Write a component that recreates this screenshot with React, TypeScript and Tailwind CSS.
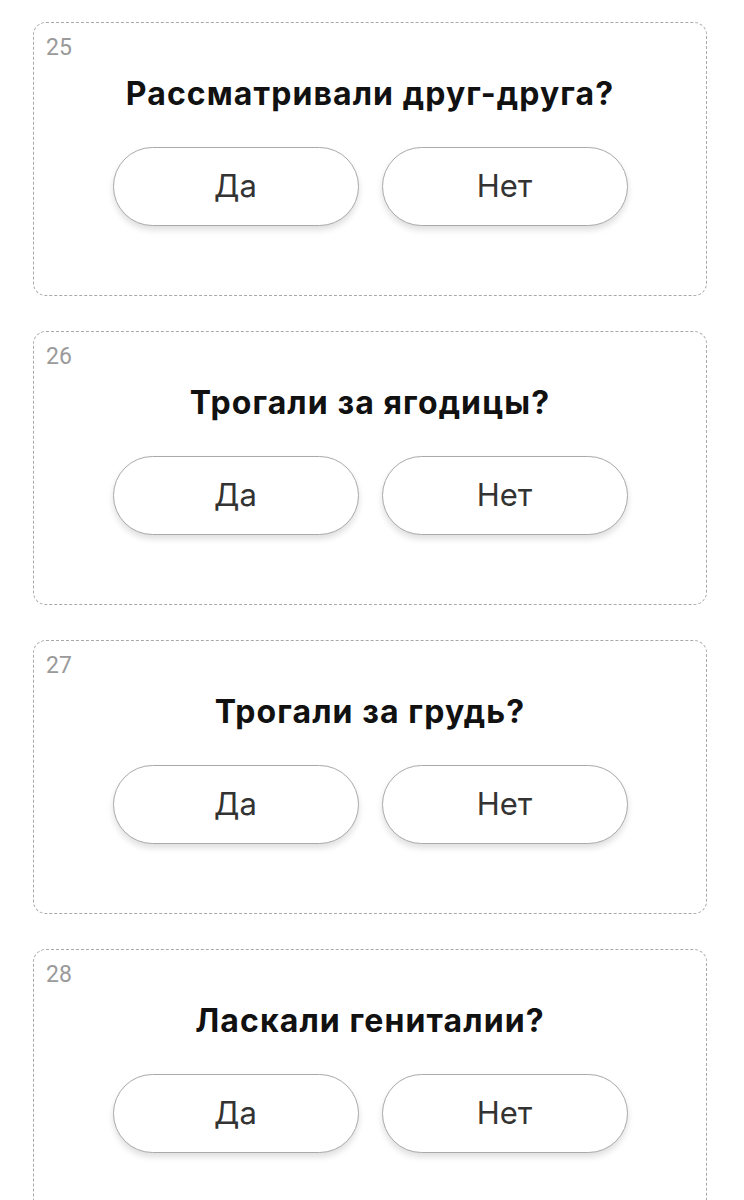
const QUESTIONS = [
  { n: 25, text: "Рассматривали друг-друга?" },
  { n: 26, text: "Трогали за ягодицы?" },
  { n: 27, text: "Трогали за грудь?" },
  { n: 28, text: "Ласкали гениталии?" },
];

export default function App() {
  return (
    <div className="min-h-screen bg-white pt-[22px] pl-[33px] font-['Inter',sans-serif]">
      <div className="flex flex-col gap-[35px] w-[674px]">
        {QUESTIONS.map((q) => (
          <div
            key={q.n}
            className="h-[274px] rounded-[13px] border border-dashed border-[#a9a9a9] px-3 pt-[11px]"
          >
            <div className="font-['Roboto',sans-serif] text-[23px] leading-[28px] text-[#9a9a9a]">
              {q.n}
            </div>
            <h2 className="mt-[12px] text-center text-[32px] leading-[40px] font-bold text-[#111] tracking-[1.1px]">
              {q.text}
            </h2>
            <div className="mt-[33px] flex justify-center gap-[23px]">
              <button className="w-[246px] h-[79px] rounded-full border-[1.5px] border-[#aaaaaa] bg-white text-[31px] text-[#333] shadow-[0_4px_6px_rgba(0,0,0,0.13)]">
                Да
              </button>
              <button className="w-[246px] h-[79px] rounded-full border-[1.5px] border-[#aaaaaa] bg-white text-[31px] text-[#333] shadow-[0_4px_6px_rgba(0,0,0,0.13)]">
                Нет
              </button>
            </div>
          </div>
        ))}
      </div>
    </div>
  );
}
